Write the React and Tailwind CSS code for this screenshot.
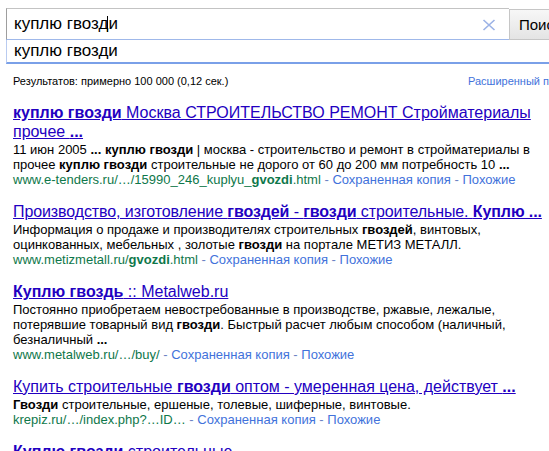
import React from "react";

const F = { fontFamily: '"Liberation Sans", Arial, sans-serif' };

function Title({ lines, className = "" }) {
  return (
    <div className={"text-[16px] leading-[19px] text-[#2200c1] underline whitespace-nowrap " + className}>
      {lines.map((l, i) => (
        <div key={i}>{l}</div>
      ))}
    </div>
  );
}

function Snip({ lines }) {
  return (
    <div className="text-[13px] leading-[15px] text-black whitespace-nowrap mt-px">
      {lines.map((l, i) => (
        <div key={i}>{l}</div>
      ))}
    </div>
  );
}

function Url({ children }) {
  return (
    <div className="text-[13px] leading-[15px] whitespace-nowrap">
      <span className="text-[#0e774a]">{children}</span>
      <span className="text-[#6d82c4]"> - </span>
      <span className="text-[#4272db]">Сохраненная копия</span>
      <span className="text-[#6d82c4]"> - </span>
      <span className="text-[#4272db]">Похожие</span>
    </div>
  );
}

export default function App() {
  return (
    <div className="w-[549px] h-[451px] overflow-hidden bg-white relative" style={F}>
      <div className="pt-2 pl-[6px] w-[640px]">
        <div className="flex">
          <div className="relative w-[503px] h-[32px] border-t border-t-[#c3c3c3] border-l border-l-[#9e9e9e] border-b border-b-[#9fb8ea] pl-[7px] text-[17px] leading-[30px] text-black">
            <span className="relative">
              куплю гвозд
              <span className="absolute right-0 top-[2px] w-px h-[16px] bg-black"></span>
            </span>
            и
            <svg className="absolute left-[475px] top-[10px]" width="14" height="12" viewBox="0 0 14 12">
              <path d="M1.5 1 L12.5 11 M12.5 1 L1.5 11" stroke="#9bb2e6" strokeWidth="1.6" fill="none" />
            </svg>
          </div>
          <div className="w-[80px] h-[31px] mt-px border border-[#c6c6c6] bg-gradient-to-b from-[#f7f7f7] to-[#e4e4e4] pl-[9px] text-[15px] leading-[29px] text-black">
            Поиск
          </div>
        </div>
        <div className="w-[620px] h-[24px] border-l border-l-[#b9cbf0] border-b-2 border-b-[#7aa0e8] pl-[7px] text-[17px] leading-[22px] text-black">
          куплю гвозди
        </div>
      </div>

      <div className="grid grid-cols-[455px_auto] pl-[13px] mt-[11px] text-[11px] leading-[13px] whitespace-nowrap">
        <div className="text-black">Результатов: примерно 100 000 (0,12 сек.)</div>
        <div className="text-[#4272db]">Расширенный поиск</div>
      </div>

      <div className="pl-[13px] pt-[15px] flex flex-col gap-[15px]">
        <div>
          <Title
            lines={[
              <><b>куплю гвозди</b> Москва СТРОИТЕЛЬСТВО РЕМОНТ Стройматериалы</>,
              <>прочее <b>...</b></>,
            ]}
          />
          <Snip
            lines={[
              <>11 июн 2005 <b>... куплю гвозди</b> | москва - строительство и ремонт в стройматериалы в</>,
              <>прочее <b>куплю гвозди</b> строительные не дорого от 60 до 200 мм потребность 10 <b>...</b></>,
            ]}
          />
          <Url>
            www.e-tenders.ru/…/15990_246_kuplyu_<b>gvozdi</b>.html
          </Url>
        </div>

        <div>
          <Title
            className="tracking-[-0.1px]"
            lines={[
              <>Производство, изготовление <b>гвоздей</b> - <b>гвозди</b> строительные. <b>Куплю ...</b></>,
            ]}
          />
          <Snip
            lines={[
              <>Информация о продаже и производителях строительных <b>гвоздей</b>, винтовых,</>,
              <>оцинкованных, мебельных , золотые <b>гвозди</b> на портале МЕТИЗ МЕТАЛЛ.</>,
            ]}
          />
          <Url>
            www.metizmetall.ru/<b>gvozdi</b>.html
          </Url>
        </div>

        <div>
          <Title lines={[<><b>Куплю гвоздь</b> :: Metalweb.ru</>]} />
          <Snip
            lines={[
              <>Постоянно приобретаем невостребованные в производстве, ржавые, лежалые,</>,
              <>потерявшие товарный вид <b>гвозди</b>. Быстрый расчет любым способом (наличный,</>,
              <>безналичный <b>...</b></>,
            ]}
          />
          <Url>www.metalweb.ru/…/buy/</Url>
        </div>

        <div>
          <Title
            lines={[
              <>Купить строительные <b>гвозди</b> оптом - умеренная цена, действует <b>...</b></>,
            ]}
          />
          <Snip lines={[<><b>Гвозди</b> строительные, ершеные, толевые, шиферные, винтовые.</>]} />
          <Url>krepiz.ru/…/index.php?…ID…</Url>
        </div>

        <div>
          <Title lines={[<><b>Куплю гвозди</b> строительные</>]} />
        </div>
      </div>
    </div>
  );
}
